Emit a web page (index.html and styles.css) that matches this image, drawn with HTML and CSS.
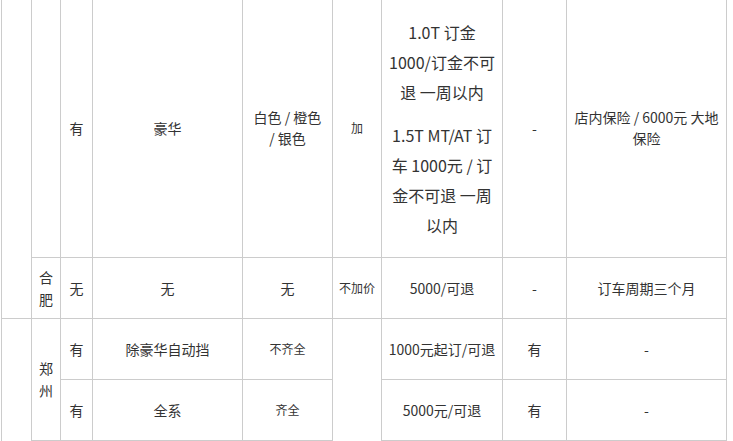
FILE: index.html
```html
<!DOCTYPE html>
<html lang="zh-CN">
<head>
<meta charset="utf-8">
<title>订车信息</title>
<link rel="stylesheet" href="styles.css">
</head>
<body>
<div class="wrap">
<table class="tbl">
  <colgroup>
    <col class="c1"><col class="c2"><col class="c3"><col class="c4"><col class="c5"><col class="c6"><col class="c7"><col class="c8"><col class="c9">
  </colgroup>
  <tbody>
    <tr class="r-big">
      <td rowspan="2"></td>
      <td></td>
      <td>有</td>
      <td>豪华</td>
      <td class="lh">白色 / 橙色<br>/ 银色</td>
      <td class="small">加</td>
      <td class="big">
        <p>1.0T 订金<br>1000/订金不可<br>退 一周以内</p>
        <p class="p2">1.5T MT/AT 订<br>车 1000元 / 订<br>金不可退 一周<br>以内</p>
      </td>
      <td>-</td>
      <td class="lh">店内保险 / 6000元 大地<br>保险</td>
    </tr>
    <tr class="r">
      <td class="city">合<br>肥</td>
      <td>无</td>
      <td>无</td>
      <td>无</td>
      <td class="small">不加价</td>
      <td>5000/可退</td>
      <td>-</td>
      <td>订车周期三个月</td>
    </tr>
    <tr class="r">
      <td rowspan="3"></td>
      <td rowspan="2" class="city">郑<br>州</td>
      <td>有</td>
      <td>除豪华自动挡</td>
      <td class="small">不齐全</td>
      <td rowspan="3"></td>
      <td>1000元起订/可退</td>
      <td>有</td>
      <td>-</td>
    </tr>
    <tr class="r">
      <td>有</td>
      <td>全系</td>
      <td class="small">齐全</td>
      <td>5000元/可退</td>
      <td>有</td>
      <td>-</td>
    </tr>
    <tr class="r">
      <td></td>
      <td></td>
      <td></td>
      <td></td>
      <td></td>
      <td></td>
      <td></td>
    </tr>
  </tbody>
</table>
</div>
</body>
</html>
```

FILE: styles.css
```css
html, body {
  margin: 0;
  padding: 0;
  background: #fff;
}

.wrap {
  padding-left: 1px;
}

.tbl {
  border-collapse: collapse;
  table-layout: fixed;
  width: 726px;
  font-family: "Microsoft YaHei", "Noto Sans CJK SC", "Noto Sans", sans-serif;
  font-size: 14px;
  color: #333;
}

.c1 { width: 30px; }
.c2 { width: 29px; }
.c3 { width: 32px; }
.c4 { width: 150px; }
.c5 { width: 90px; }
.c6 { width: 49px; }
.c7 { width: 121px; }
.c8 { width: 64px; }
.c9 { width: 160px; }

.tbl td {
  border: 1px solid #cccccc;
  text-align: center;
  vertical-align: middle;
  padding: 0 4px;
  line-height: 20px;
  overflow: hidden;
}

.tbl tr:first-child td {
  border-top: none;
}

.r-big { height: 257px; }
.r { height: 61px; }

.tbl td.city {
  padding: 0;
  line-height: 22px;
}

.tbl td.small {
  font-size: 12px;
  padding: 0;
}

.tbl td.lh {
  line-height: 21px;
  white-space: nowrap;
}

.tbl td.big {
  font-size: 16px;
  line-height: 30px;
  padding: 0;
  white-space: nowrap;
}

.big p {
  margin: 0;
}

.big .p2 {
  margin-top: 13px;
}
```
